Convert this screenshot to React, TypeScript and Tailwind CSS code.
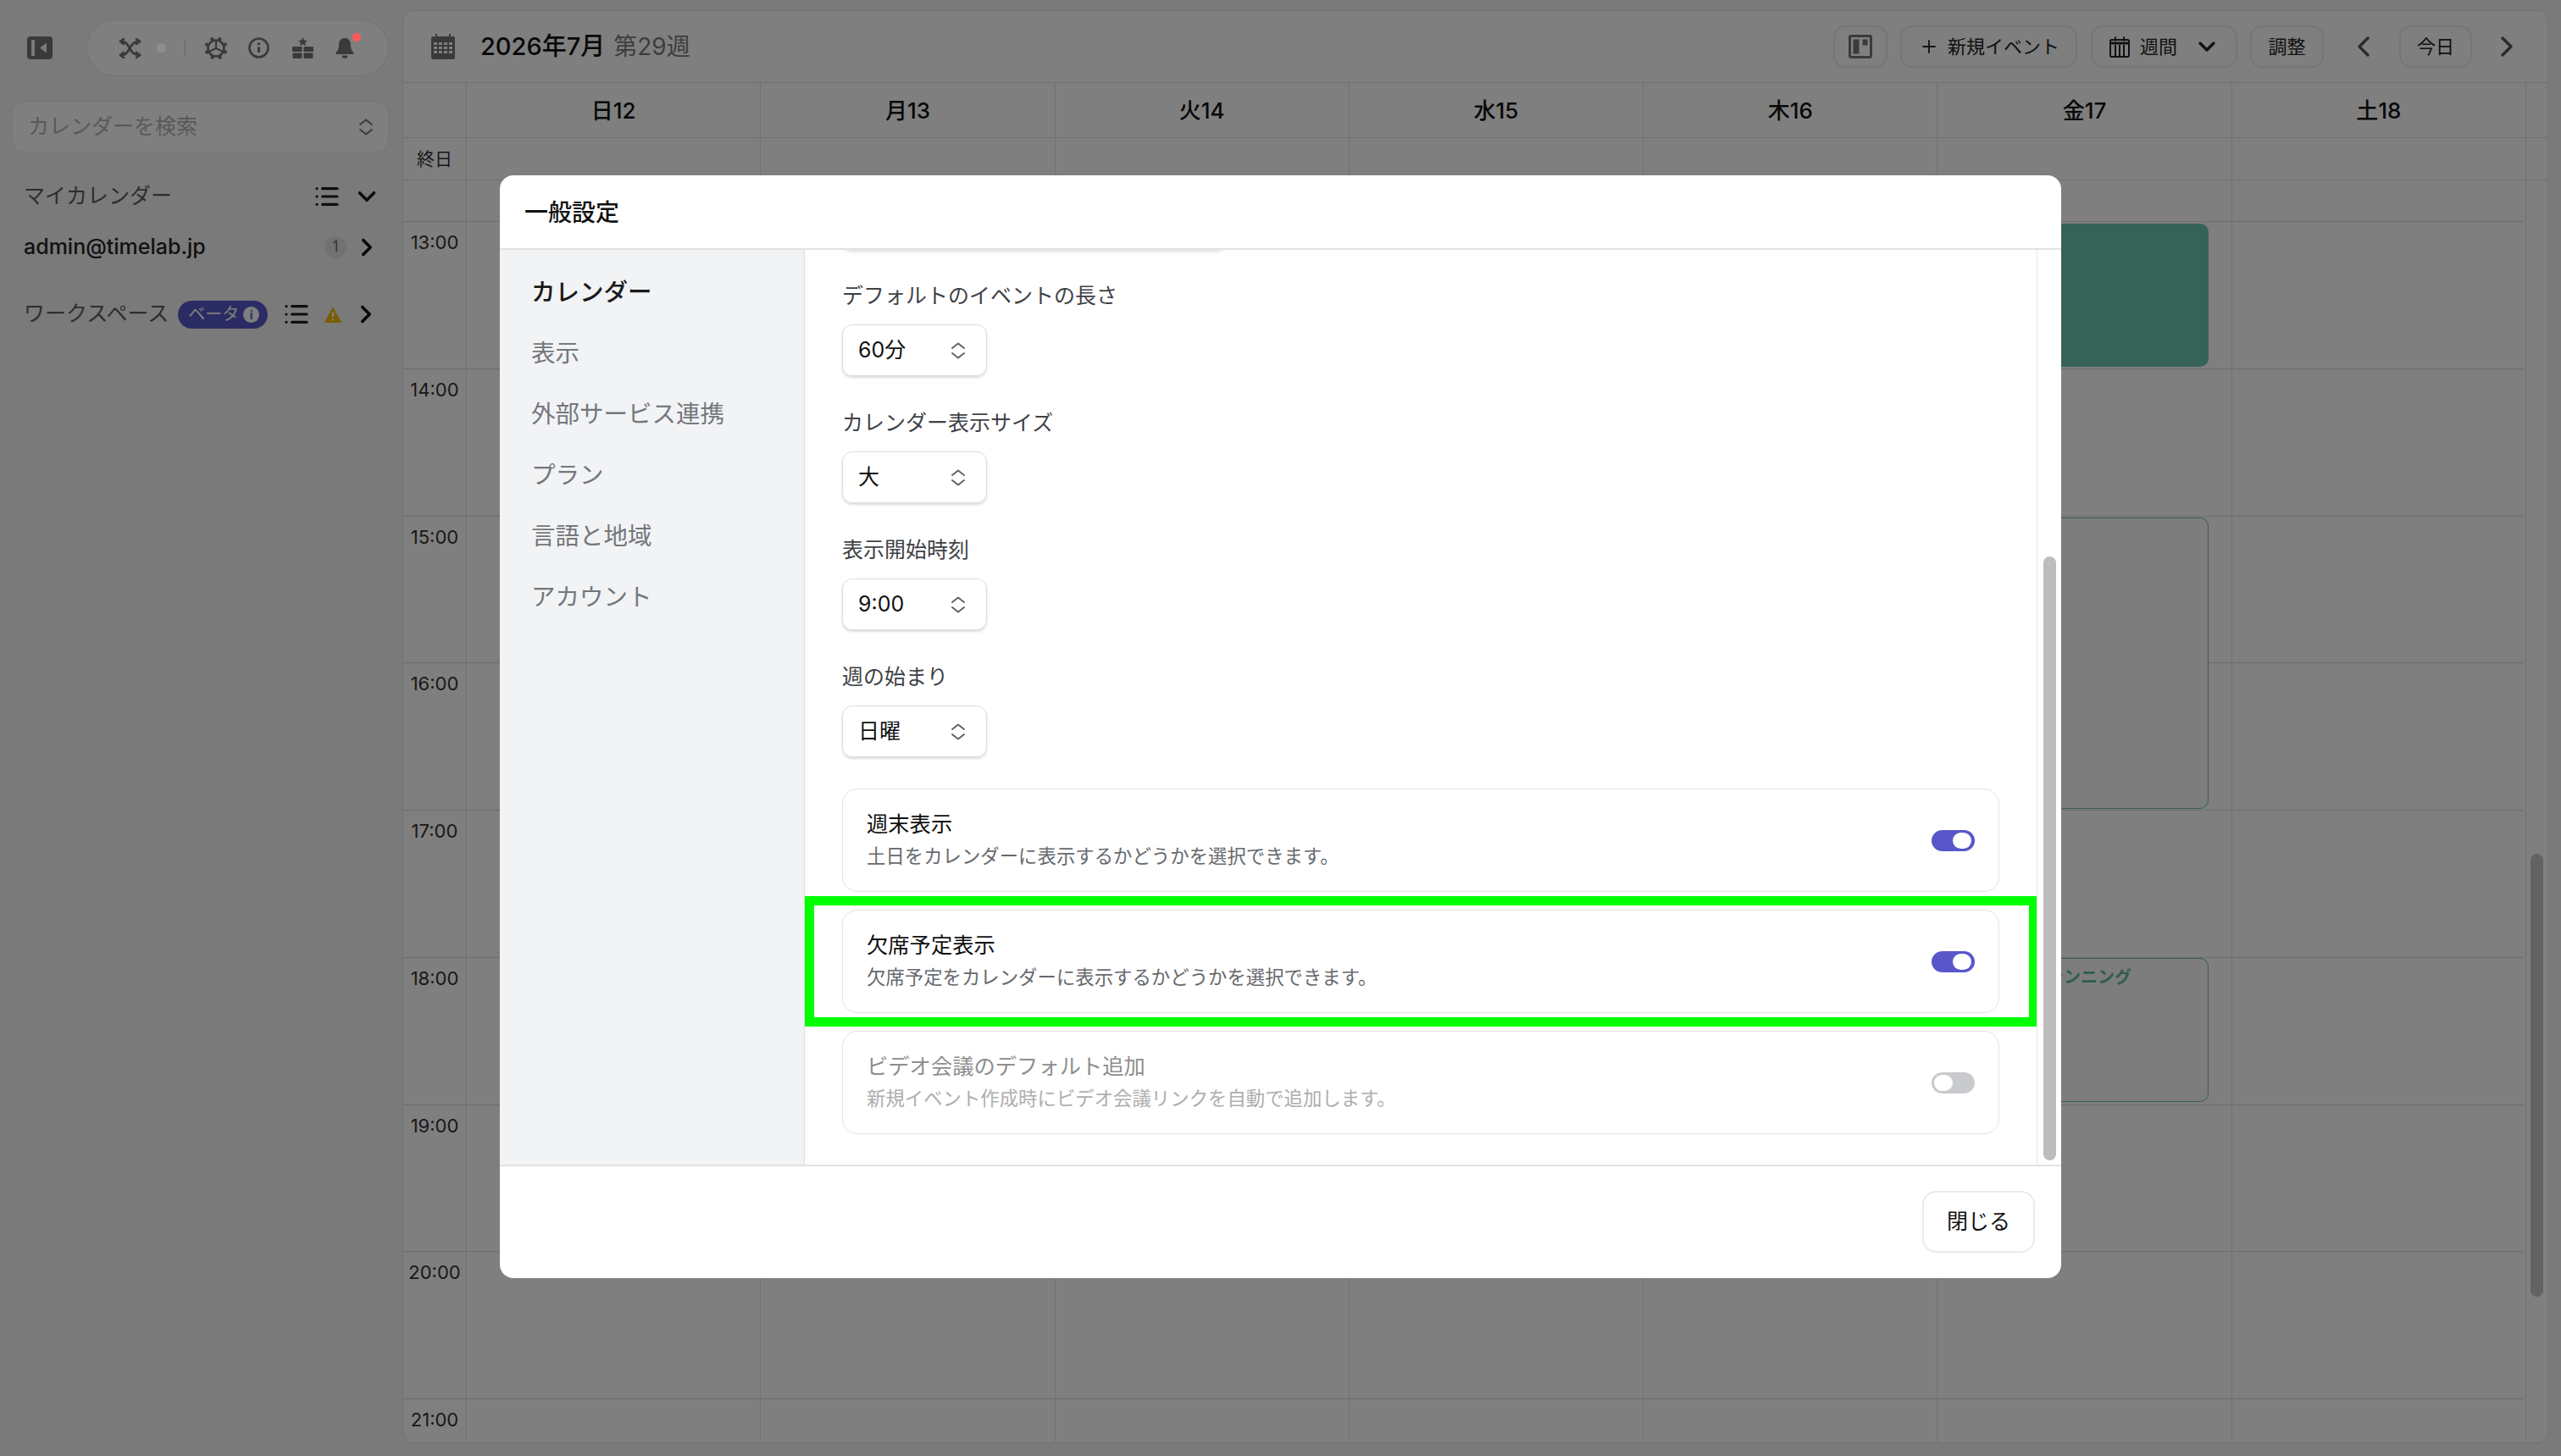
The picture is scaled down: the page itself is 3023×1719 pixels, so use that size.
import { ChevronDown, ChevronLeft, ChevronRight, List, Plus } from "lucide-react";

const days = ["日12", "月13", "火14", "水15", "木16", "金17", "土18"];
const hours = ["13:00", "14:00", "15:00", "16:00", "17:00", "18:00", "19:00", "20:00", "21:00"];
const navItems = ["カレンダー", "表示", "外部サービス連携", "プラン", "言語と地域", "アカウント"];
const fields = [
  { label: "デフォルトのイベントの長さ", value: "60分" },
  { label: "カレンダー表示サイズ", value: "大" },
  { label: "表示開始時刻", value: "9:00" },
  { label: "週の始まり", value: "日曜" },
];
const toggles = [
  { title: "週末表示", desc: "土日をカレンダーに表示するかどうかを選択できます。", on: true },
  { title: "欠席予定表示", desc: "欠席予定をカレンダーに表示するかどうかを選択できます。", on: true },
  { title: "ビデオ会議のデフォルト追加", desc: "新規イベント作成時にビデオ会議リンクを自動で追加します。", on: false },
];

function UpDown({ className }: { className?: string }) {
  return (
    <svg viewBox="0 0 18 20" className={className} fill="none" stroke="currentColor" strokeWidth="2" strokeLinecap="round" strokeLinejoin="round">
      <path d="M2 7l7-5.5L16 7" />
      <path d="M2 13l7 5.5L16 13" />
    </svg>
  );
}

function GearIcon() {
  const teeth = [0, 45, 90, 135, 180, 225, 270, 315];
  return (
    <svg viewBox="0 0 28 28" className="ml-[22px] h-[28px] w-[28px]" fill="none" stroke="currentColor" strokeWidth="2.6">
      <circle cx="14" cy="14" r="9.500" />
      {teeth.map((t) => (
        <path key={t} d="M14 0.500v4" strokeWidth="4" transform={`rotate(${t + 22} 14 14)`} />
      ))}
      <path d="M14 14L14 5M14 14l8 4M14 14l-8 4" strokeWidth="2.2" />
    </svg>
  );
}

function WeekIcon() {
  return (
    <svg viewBox="0 0 24 25" className="h-[25px] w-[24px]" fill="none" stroke="currentColor" strokeWidth="2">
      <rect x="1" y="4" width="22" height="20" rx="1.5" />
      <path d="M1 8h22" strokeWidth="3" />
      <path d="M7 0.500v5M17 0.500v5M7 10v14M12 10v14M17 10v14" />
    </svg>
  );
}

function Toggle({ on }: { on: boolean }) {
  return (
    <div className={`flex h-[25px] w-[51px] shrink-0 items-center rounded-full ${on ? "justify-end bg-[#5856c9] pr-[4px]" : "justify-start bg-[#c9cacd] pl-[3px]"}`}>
      <div className="h-[19px] w-[22px] rounded-full bg-white" />
    </div>
  );
}

export default function App() {
  return (
    <div className="relative flex h-[1719px] w-[3023px] overflow-hidden bg-[#f4f4f5] font-[Inter,'Noto_Sans_CJK_JP',sans-serif] text-[#1f1f1f]">
      {/* Sidebar */}
      <aside className="w-[475px] shrink-0 pl-[14px] pr-[16px]">
        <div className="flex h-[113px] items-start pt-[23px]">
          <svg viewBox="0 0 30 27" className="ml-[18px] mt-[20px] h-[27px] w-[30px] text-[#74747a]" fill="currentColor">
            <path fillRule="evenodd" d="M4 0h22a4 4 0 014 4v19a4 4 0 01-4 4H4a4 4 0 01-4-4V4a4 4 0 014-4zm1 4v19h4V4H5zm18 3.500l-8 6 8 6v-12z" />
          </svg>
          <div className="ml-[40px] flex h-[67px] w-[357px] items-center rounded-full border border-[#e8e8e8] bg-white pl-[37px] text-[#74747a]">
            <svg viewBox="0 0 28 24" className="h-[24px] w-[28px]" fill="none" stroke="currentColor" strokeWidth="2.8" strokeLinecap="round" strokeLinejoin="round">
              <path d="M3 4c6 0 7 3 10 8s5 8 12 8" />
              <path d="M3 20c6 0 7-3 10-8s5-8 12-8" />
              <path d="M21 1l4 3-4 3M21 17l4 3-4 3M6 1L2 4l4 3M6 17l-4 3 4 3" />
            </svg>
            <div className="relative z-50 ml-[17px] h-[11px] w-[11px] rounded-full bg-[#8e8e92]" />
            <div className="ml-[22px] h-[21px] w-px bg-[#c4c4c4]" />
            <GearIcon />
            <svg viewBox="0 0 25 25" className="ml-[24px] h-[25px] w-[25px]" fill="none" stroke="currentColor" strokeWidth="2.6">
              <circle cx="12.5" cy="12.5" r="11" />
              <circle cx="12.5" cy="7.8" r="1.7" fill="currentColor" stroke="none" />
              <path d="M12.5 11.5v6.5" strokeWidth="3" />
            </svg>
            <svg viewBox="0 0 25 25" className="ml-[27px] h-[25px] w-[25px]" fill="currentColor">
              <path d="M12.5 0l1.7 3.4 3.7.5-2.7 2.6.7 3.6-3.4-1.8-3.4 1.8.7-3.6-2.7-2.6 3.7-.5z" />
              <rect x="0" y="11" width="11.5" height="6" rx="1" />
              <rect x="13.5" y="11" width="11.5" height="6" rx="1" />
              <rect x="0.5" y="18.5" width="11" height="6.5" rx="1" />
              <rect x="13.5" y="18.5" width="11" height="6.5" rx="1" />
            </svg>
            <div className="relative ml-[26px]">
              <svg viewBox="0 0 22 24" className="h-[24px] w-[22px]" fill="currentColor">
                <path d="M11 0c4.500 0 7 3.500 7 8 0 4 1 6.500 3.500 9.500.6.800.2 1.500-.8 1.500H1.300c-1 0-1.400-.7-.8-1.500C3 14.500 4 12 4 8c0-4.500 2.500-8 7-8zM7.500 20.500h7c0 2-1.500 3.500-3.500 3.500s-3.500-1.500-3.500-3.500z" />
              </svg>
              <div className="absolute -right-[8px] -top-[6px] z-50 h-[10px] w-[10px] rounded-full bg-[#ff5a5a]" />
            </div>
          </div>
        </div>
        <div className="mt-[7px] flex h-[60px] items-center justify-between rounded-[14px] border border-[#ececec] bg-white pl-[18px] pr-[17px] text-[25px] text-[#b3b3b6]">
          <span>カレンダーを検索</span>
          <UpDown className="h-[20px] w-[18px] text-[#74747a]" />
        </div>
        <div className="mt-[33px] flex h-[38px] items-center pl-[14px] pr-[9px] text-[25px] text-[#5c5c5c]">
          <span className="flex-1">マイカレンダー</span>
          <List size={32} strokeWidth={2.4} className="text-[#1c1c1c]" />
          <ChevronDown size={34} strokeWidth={2.5} className="ml-[14px] text-[#1c1c1c]" />
        </div>
        <div className="mt-[22px] flex h-[38px] items-center pl-[14px] pr-[9px] text-[25px] font-medium text-[#222]">
          <span className="flex-1">admin@timelab.jp</span>
          <div className="flex h-[26px] w-[26px] items-center justify-center rounded-full bg-[#e4e4e4] text-[17px] font-normal text-[#666]">1</div>
          <ChevronRight size={34} strokeWidth={2.5} className="ml-[7px] text-[#111]" />
        </div>
        <div className="mt-[41px] flex h-[38px] items-center pl-[14px] pr-[9px] text-[25px] text-[#5c5c5c]">
          <span>ワークスペース</span>
          <div className="ml-[11px] flex h-[33px] w-[106px] items-center rounded-full bg-[#5858c8] pl-[12px] text-[20px] text-white">
            <span className="flex-1">ベータ</span>
            <div className="mr-[10px] flex h-[19px] w-[19px] items-center justify-center rounded-full bg-white text-[14px] font-bold text-[#5858c8]">i</div>
          </div>
          <List size={32} strokeWidth={2.4} className="ml-[18px] text-[#1c1c1c]" />
          <svg viewBox="0 0 22 19" className="ml-[16px] h-[19px] w-[22px]">
            <path d="M11 0.500L21.500 19H0.500z" fill="#f5bb00" />
            <path d="M11 6.500v6M11 14.500v2" stroke="#fff" strokeWidth="2.4" />
          </svg>
          <ChevronRight size={34} strokeWidth={2.5} className="ml-[11px] text-[#111]" />
        </div>
      </aside>

      {/* Calendar panel */}
      <main className="mt-[12px] flex h-[1692px] w-[2533px] shrink-0 flex-col overflow-hidden rounded-[14px] border border-[#e6e6e6] bg-white">
        <header className="flex h-[85px] shrink-0 items-center border-b border-[#dedede] pl-[33px]">
          <svg viewBox="0 0 28 30" className="h-[30px] w-[28px] text-[#74747a]" fill="currentColor">
            <path fillRule="evenodd" d="M2 3h3V0h2v3h14V0h2v3h3a2 2 0 012 2v23a2 2 0 01-2 2H2a2 2 0 01-2-2V5a2 2 0 012-2zM3 10v3h4v-3H3zm6 0v3h4v-3H9zm6 0v3h4v-3h-4zm6 0v3h4v-3h-4zM3 15v3h4v-3H3zm6 0v3h4v-3H9zm6 0v3h4v-3h-4zm6 0v3h4v-3h-4zM3 20v3h4v-3H3zm6 0v3h4v-3H9zm6 0v3h4v-3h-4zm6 0v3h4v-3h-4z" />
          </svg>
          <span className="ml-[30px] text-[29px] font-medium text-[#111]">2026年7月</span>
          <span className="ml-[10px] text-[28px] text-[#7b7b7b]">第29週</span>

          <div className="ml-auto flex h-[50px] items-center pr-[28px] text-[22px] text-[#222]">
            <button className="flex h-full w-[64px] items-center justify-center rounded-[14px] border-2 border-[#ececec]">
              <svg viewBox="0 0 28 28" className="h-[28px] w-[28px] text-[#74747a]" fill="currentColor">
                <path fillRule="evenodd" d="M3 0h22a3 3 0 013 3v22a3 3 0 01-3 3H3a3 3 0 01-3-3V3a3 3 0 013-3zm0 3v22h22V3H3zm2.500 2.500h7v17h-7v-17zm11 0h6v7h-6v-7z" />
              </svg>
            </button>
            <button className="ml-[15px] flex h-full w-[209px] items-center rounded-[14px] border-2 border-[#ececec] pl-[20px]">
              <Plus size={24} strokeWidth={1.8} />
              <span className="ml-[10px]">新規イベント</span>
            </button>
            <button className="ml-[16px] flex h-full w-[173px] items-center rounded-[14px] border-2 border-[#ececec] pl-[20px]">
              <WeekIcon />
              <span className="ml-[12px]">週間</span>
              <ChevronDown size={32} strokeWidth={2.5} className="ml-[19px]" />
            </button>
            <button className="ml-[15px] flex h-full w-[87px] items-center justify-center rounded-[14px] border-2 border-[#ececec]">調整</button>
            <ChevronLeft size={40} strokeWidth={2} className="ml-[27px] text-[#555]" />
            <button className="ml-[22px] flex h-full w-[86px] items-center justify-center rounded-[14px] border-2 border-[#ececec]">今日</button>
            <ChevronRight size={40} strokeWidth={2} className="ml-[21px] text-[#555]" />
          </div>
        </header>

        <div className="grid h-[65px] shrink-0 grid-cols-[75px_repeat(7,1fr)_25px] border-b border-[#dedede]">
          <div className="border-r border-[#e2e2e2]" />
          {days.map((d) => (
            <div key={d} className="flex items-center justify-center border-r border-[#e2e2e2] pt-[1px] text-[26px] font-medium text-[#111]">
              {d}
            </div>
          ))}
          <div />
        </div>
        <div className="grid h-[50px] shrink-0 grid-cols-[75px_repeat(7,1fr)_25px] border-b border-[#dedede]">
          <div className="flex items-center justify-center border-r border-[#e2e2e2] text-[21px] text-[#333]">終日</div>
          {days.map((d) => (
            <div key={d} className="border-r border-[#e2e2e2]" />
          ))}
          <div />
        </div>

        <div className="relative flex min-h-0 flex-1">
          <div className="min-w-0 flex-1">
            <div className="grid h-[48px] grid-cols-[75px_repeat(7,1fr)]">
              <div className="border-r border-[#e2e2e2]" />
              {days.map((d) => (
                <div key={d} className="border-r border-[#e2e2e2]" />
              ))}
            </div>
            {hours.map((h) => (
              <div key={h}>
                <div className="mr-[3px] h-px bg-[#dadada]" />
                <div className="grid h-[172.75px] grid-cols-[75px_repeat(7,1fr)]">
                  <div className="border-r border-[#e2e2e2] pt-[10px] text-center text-[22px] leading-[28px] text-[#333]">{h}</div>
                  {days.map((d) => (
                    <div key={d} className="border-r border-[#e2e2e2]" />
                  ))}
                </div>
              </div>
            ))}
          </div>
          <div className="h-full w-[25px] shrink-0 pl-[5px] pt-[795px]">
            <div className="h-[523px] w-[15px] rounded-full bg-[#c6c6c6]" />
          </div>

          {/* Events */}
          <div className="absolute left-[1814px] top-[51px] h-[169px] w-[317px] rounded-[10px] bg-[#6cc6b1]" />
          <div className="absolute left-[1814px] top-[398px] h-[344px] w-[317px] rounded-[10px] border border-[#68bfa9] bg-[#fafafa]" />
          <div className="absolute left-[1814px] top-[918px] h-[170px] w-[317px] rounded-[10px] border border-[#68bfa9] bg-[#fafafa] pl-[125px] pt-[7px] text-[20px] font-semibold text-[#5fb8a3]">
            ランニング
          </div>
        </div>
      </main>

      {/* Dialog overlay */}
      <div className="absolute inset-0 z-40 bg-black/50" />
      <div className="absolute left-[590px] top-[207px] z-50 flex h-[1302px] w-[1843px] flex-col overflow-hidden rounded-[16px] bg-white">
        <div className="flex h-[88px] shrink-0 items-center border-b-2 border-[#e2e2e2] pl-[29px] pt-[2px] text-[28px] font-medium text-[#111]">一般設定</div>
        <div className="flex min-h-0 flex-1">
          <nav className="w-[360px] shrink-0 border-r border-[#dcdcdc] bg-[#f2f3f5] pl-[37px] pt-[14px]">
            {navItems.map((item, i) => (
              <div key={item} className={`flex h-[72px] items-center text-[28.5px] ${i === 0 ? "font-medium text-[#1a1a1a]" : "text-[#74777c]"}`}>
                {item}
              </div>
            ))}
          </nav>
          <div className="relative min-w-0 flex-1 overflow-hidden border-r border-[#e8e8e8] px-[44px]">
            <div className="-mt-[61px] mb-[37px] h-[61px] w-[453px] rounded-[12px] border border-[#dcdcdc] shadow-[0_2px_5px_rgba(0,0,0,0.14)]" />
            {fields.map((f) => (
              <div key={f.label} className="mb-[38px]">
                <div className="mb-[17px] h-[34px] text-[25px] leading-[34px] text-[#3f4246]">{f.label}</div>
                <div className="flex h-[61px] w-[171px] items-center justify-between rounded-[12px] border border-[#dcdcdc] pl-[18px] pr-[9px] text-[25px] text-[#111] shadow-[0_2px_3px_rgba(0,0,0,0.14)]">
                  <span>{f.value}</span>
                  <UpDown className="mr-[15px] h-[20px] w-[18px] text-[#5f6368]" />
                </div>
              </div>
            ))}
            <div className="-mt-px flex flex-col gap-[21px]">
              {toggles.map((t) => (
                <div key={t.title} className="flex h-[122px] items-center justify-between rounded-[18px] border border-[#e2e2e2] px-[28px]">
                  <div>
                    <div className={`text-[25.3px] leading-[38px] ${t.on ? "text-[#111]" : "text-[#8e8e8e]"}`}>{t.title}</div>
                    <div className={`text-[22.4px] leading-[38px] ${t.on ? "text-[#66696e]" : "text-[#aeaeae]"}`}>{t.desc}</div>
                  </div>
                  <Toggle on={t.on} />
                </div>
              ))}
            </div>
            {/* Annotation frame */}
            <div className="absolute left-0 top-[763px] h-[154px] w-[1456px] border-[11px] border-[#00ff00]" />
          </div>
          <div className="w-[28px] shrink-0 pb-[5px] pl-[7px] pt-[362px]">
            <div className="h-full w-[15px] rounded-full bg-[#bdbdbd]" />
          </div>
        </div>
        <div className="flex h-[134px] shrink-0 justify-end border-t-2 border-[#e2e2e2] pr-[31px] pt-[29px]">
          <button className="h-[73px] w-[133px] rounded-[16px] border-2 border-[#ebebeb] text-[25px] text-[#111]">閉じる</button>
        </div>
      </div>
    </div>
  );
}
